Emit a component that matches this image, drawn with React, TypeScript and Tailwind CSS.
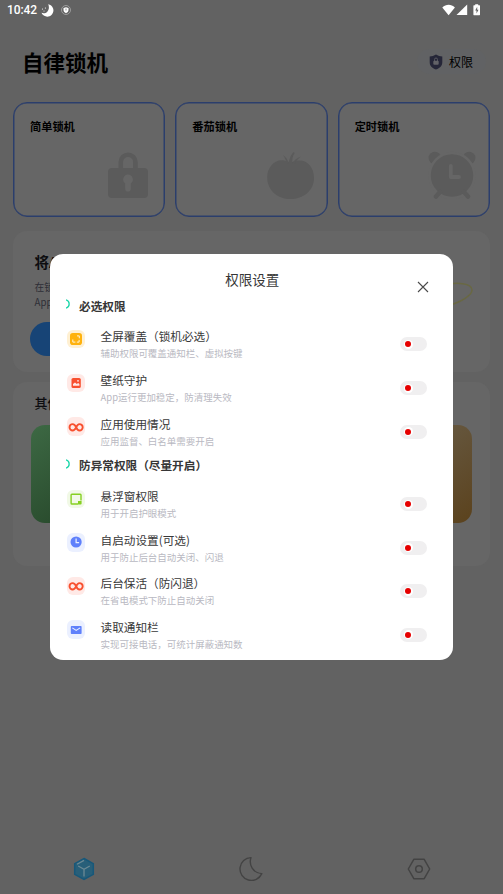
import React from "react";

type IconKind = "expand" | "image" | "infinity" | "window" | "clock" | "mail";
type Permission = { title: string; note: string; icon: IconKind };

const required: Permission[] = [
  { title: "全屏覆盖（锁机必选）", note: "辅助权限可覆盖通知栏、虚拟按键", icon: "expand" },
  { title: "壁纸守护", note: "App运行更加稳定，防清理失效", icon: "image" },
  { title: "应用使用情况", note: "应用监督、白名单需要开启", icon: "infinity" },
];

const optional: Permission[] = [
  { title: "悬浮窗权限", note: "用于开启护眼模式", icon: "window" },
  { title: "自启动设置(可选)", note: "用于防止后台自动关闭、闪退", icon: "clock" },
  { title: "后台保活（防闪退）", note: "在省电模式下防止自动关闭", icon: "infinity" },
  { title: "读取通知栏", note: "实现可接电话，可统计屏蔽通知数", icon: "mail" },
];

const tints: Record<IconKind, string> = {
  expand: "bg-[#fff0d2]",
  image: "bg-[#ffe9e6]",
  infinity: "bg-[#ffe9e6]",
  window: "bg-[#f1f9e6]",
  clock: "bg-[#ebf0ff]",
  mail: "bg-[#ebf0ff]",
};

function Glyph({ kind }: { kind: IconKind }) {
  return (
    <svg viewBox="0 0 18 18" className="size-[18px]" fill="none">
      {kind === "expand" && (
        <>
          <rect x="3" y="3" width="12" height="12" rx="2.8" fill="#ffb20d" />
          <path d="M10 5.9h2.3v2.4M5.8 9.5v2.6h2.6M9.8 12.1h2.3V9.9" stroke="#fff3d8" strokeWidth="1" />
        </>
      )}
      {kind === "image" && (
        <>
          <rect x="4.5" y="4" width="9.3" height="10" rx="1.6" fill="#f8502f" />
          <path d="M6 11.8V10l2-1.4 1.8 1.3 1.3-.8 1.3 1v1.7z" fill="#ffe9e6" />
          <circle cx="11" cy="6.8" r=".9" fill="#ffe9e6" />
        </>
      )}
      {kind === "infinity" && (
        <path
          d="M9.1 9.2C8.3 7.3 7.3 6.1 5.7 6.1a3.2 3.2 0 1 0 0 6.4c1.7 0 2.6-1.6 3.4-3.2.7-1.7 1.7-3.2 3.4-3.2a3.2 3.2 0 1 1 0 6.4c-1.6 0-2.6-1.3-3.4-3.300"
          stroke="#f8502f"
          strokeWidth="1.9"
        />
      )}
      {kind === "window" && (
        <>
          <path d="M14 10.500V5a.8.8 0 0 0-.8-.8H4.900a.8.8 0 0 0-.8.8v8.200c0 .4.4.8.8.8H11" stroke="#86d021" strokeWidth="1.400" />
          <path d="M11 11h3.600v2.600a1 1 0 0 1-1 1H11z" fill="#86d021" />
        </>
      )}
      {kind === "clock" && (
        <>
          <circle cx="9.1" cy="9" r="5.6" fill="#5f80fb" />
          <path d="M9.1 5.6v4.1h3" stroke="#ebf0ff" strokeWidth="1.2" />
        </>
      )}
      {kind === "mail" && (
        <>
          <rect x="3.8" y="5" width="10.8" height="8" rx=".8" fill="#5f80fb" />
          <path d="M5.3 6.9 9.2 9.4l3.9-2.5" stroke="#ebf0ff" strokeWidth="1.1" />
        </>
      )}
    </svg>
  );
}

function Toggle() {
  return (
    <span className="mt-[11.5px] flex h-[14px] w-[27.5px] items-center rounded-full bg-[#f0eff0] pl-1">
      <span className="flex size-[9px] items-center justify-center rounded-full bg-white">
        <span className="size-1.5 rounded-full bg-[#e60000]" />
      </span>
    </span>
  );
}

function Row({ item }: { item: Permission }) {
  return (
    <div className="flex h-[43.65px] shrink-0 items-start pl-[16.5px] pr-[25.5px]">
      <span className={"mt-1 flex size-[18.5px] shrink-0 items-center justify-center rounded-md " + tints[item.icon]}>
        <Glyph kind={item.icon} />
      </span>
      <div className="ml-[15.5px] flex flex-1 flex-col whitespace-nowrap pt-[2.4px]">
        <span className="text-[11.65px] leading-4 text-[#383838]">{item.title}</span>
        <span className="mt-[2px] text-[9.47px] leading-[14px] text-[#b9b9c2]">{item.note}</span>
      </div>
      <Toggle />
    </div>
  );
}

function Section({ title, items }: { title: string; items: Permission[] }) {
  return (
    <section>
      <div className="flex h-[28.6px] items-start pl-4">
        <svg viewBox="0 0 5 12" className="mt-[1px] h-3 w-[5px]" fill="none">
          <path d="M0 1.8a4.3 4.3 0 0 1 0 8.3" stroke="#19d6a8" strokeWidth="1.3" />
        </svg>
        <h3 className="-mt-[0.6px] ml-2 text-[11.65px] font-bold leading-[17px] text-[#363636]">{title}</h3>
      </div>
      {items.map((p) => (
        <Row key={p.title} item={p} />
      ))}
    </section>
  );
}

function StatusBar() {
  return (
    <div className="flex h-5 items-center pl-[7px] pr-[22px] text-white">
      <span className="font-[Roboto] text-[12px] font-medium leading-5 tracking-[-0.1px]">10:42</span>
      <svg viewBox="0 0 13 13" className="ml-1 size-[13px]" fill="currentColor">
        <path d="M7.2.3a6.2 6.2 0 1 1-6.7 8.5c4.500 2.100 9.200-3 6.700-8.500z" />
        <circle cx="1.500" cy="5" r=".6" />
        <circle cx="4.400" cy="4" r=".6" />
        <circle cx="3" cy="7" r=".5" />
      </svg>
      <svg viewBox="0 0 10 10" className="ml-[7px] size-[10px]" fill="none">
        <circle cx="5" cy="5" r="4.500" stroke="#b5b5b5" strokeWidth=".7" />
        <path d="M5 2.300 7.500 3v2c0 1.500-1 2.500-2.500 3.200C3.500 7.500 2.500 6.500 2.500 5V3z" fill="#fff" />
        <path d="M5 3.500v2" stroke="#666" strokeWidth=".7" />
      </svg>
      <svg viewBox="0 0 39 12" className="ml-auto h-3 w-[39px]" fill="currentColor">
        <path d="M.3 3.500C4-.2 9.200-.2 12.900 3.500L6.600 11.300z" />
        <path d="M25.200.400v10.700H14.500z" />
        <path d="M33.200.200h3v1h1.300c.3 0 .5.200.5.500v9c0 .3-.2.500-.5.500h-5.600c-.3 0-.5-.2-.5-.5v-9c0-.3.200-.5.500-.5h1.300z" />
        <path d="m35.200 2.800-2 3.700h1.300v3l2-3.800h-1.300z" fill="#626262" />
      </svg>
    </div>
  );
}

function LockArt() {
  return (
    <svg viewBox="0 0 40 46" className="mb-[18px] mr-4 h-[46px] w-10" fill="none">
      <path d="M12.800 17V10a7.300 7.300 0 0 1 14.600 0v7" stroke="#5b5b5b" strokeWidth="4.600" />
      <rect y="16" width="40" height="30" rx="4" fill="#5b5b5b" />
      <path d="M20 22.500a5 5 0 0 1 2.800 9v5.300a2.800 2.800 0 0 1-5.600 0v-5.300a5 5 0 0 1 2.800-9z" fill="#666" />
    </svg>
  );
}

function TomatoArt() {
  return (
    <svg viewBox="0 0 47 47" className="mb-[17px] mr-[13px] size-[47px]" fill="#5b5b5b">
      <path d="M21.500 10C10 4 .2 14 .2 25 .2 39 11 47 23.500 47S47 39 47 26C47 14 38 5 26 10z" />
      <path d="M21.500 12C22 7 24 3 26.300.2l1.500.6C25.500 4 25 7 25.500 12z" />
      <path d="M22 12c-1-4-3-7-6-9 2 3 2.500 5 3.500 7zM25 12c2-4 5-6 9-7.500-3.500 2.500-5 5-6.500 7.500z" />
    </svg>
  );
}

function AlarmArt() {
  return (
    <svg viewBox="0 0 48 48" className="mb-[17px] mr-[13px] size-12" fill="none">
      <circle cx="6.800" cy="7" r="6.200" fill="#5b5b5b" />
      <circle cx="41.200" cy="7" r="6.200" fill="#5b5b5b" />
      <circle cx="24" cy="24.500" r="22.500" fill="#5b5b5b" stroke="#666" strokeWidth="2.600" />
      <path d="m12 41-4 4.500M36 41l4 4.500" stroke="#5b5b5b" strokeWidth="4.500" strokeLinecap="round" />
      <path d="M22.800 15v11H31" stroke="#666" strokeWidth="3.800" strokeLinecap="round" strokeLinejoin="round" />
    </svg>
  );
}

function ModeCard({ title, children }: { title: string; children: React.ReactNode }) {
  return (
    <div className="flex h-[115.500px] flex-col justify-between rounded-[14px] border border-[#2b3e6c] bg-[#666666] shadow-[inset_0_0_0_0.500px_#2b3e6c]">
      <span className="pl-4 pt-[15.500px] text-[11.200px] font-bold leading-[17px] text-black">{title}</span>
      <div className="flex justify-end">{children}</div>
    </div>
  );
}

function BottomNav() {
  return (
    <nav className="mt-auto grid h-[50px] grid-cols-3 items-center justify-items-center">
      <svg viewBox="0 0 22 24" className="h-6 w-[22px]" fill="none">
        <path d="m11 1.500 9.300 5.200v10.600L11 22.500l-9.300-5.200V6.700z" fill="#285f79" stroke="#17587a" strokeWidth="1.500" />
        <path d="M4 7.300 11 3.400M5.200 9 11 12.300 16.800 9M11 12.300v7.200" stroke="#6b8994" strokeWidth="1.300" />
      </svg>
      <svg viewBox="0 0 24 26" className="h-[26px] w-6" fill="none">
        <path d="M12 1.600A11.400 11.400 0 1 0 22.800 17.600C14 17 9.500 9 12 1.600z" stroke="#434343" strokeWidth="1.400" strokeLinejoin="round" />
      </svg>
      <svg viewBox="0 0 24 22" className="h-[22px] w-6" fill="none">
        <path d="M6.800 1.300h10.400L22.700 11l-5.500 9.700H6.800L1.300 11z" stroke="#434343" strokeWidth="1.500" strokeLinejoin="round" />
        <circle cx="12" cy="11" r="3.300" stroke="#434343" strokeWidth="1.500" />
      </svg>
    </nav>
  );
}

export default function App() {
  return (
    <div className="relative flex h-[894px] w-[503px] flex-col overflow-hidden bg-[#626262] font-['Noto_Sans_CJK_SC',sans-serif]">
      <StatusBar />
      <header className="flex h-[81.500px] items-center justify-between pl-[22px] pr-[17px] pt-[1.500px]">
        <h1 className="text-[21.500px] font-bold leading-8 text-black">自律锁机</h1>
        <div className="flex h-[25px] w-[69px] items-center rounded-full bg-[#616264] pl-[12px]">
          <svg viewBox="0 0 14 16" className="h-4 w-3.5 shrink-0" fill="none">
            <path d="M7 .5c2 1.300 4 2 6.300 2v5.700c0 3.600-2.300 6-6.300 7.300-4-1.300-6.300-3.700-6.300-7.300V2.500C3 2.500 5 1.800 7 .5z" fill="#252638" />
            <rect x="4.300" y="6.700" width="5.400" height="4" rx="1" fill="#626267" />
            <path d="M5.500 7V5.500a1.500 1.500 0 0 1 3 0V7" stroke="#626267" strokeWidth=".8" />
          </svg>
          <span className="ml-1.5 whitespace-nowrap text-[12px] leading-5 text-black">权限</span>
        </div>
      </header>
      <main className="flex flex-col px-[13px]">
        <div className="grid grid-cols-3 gap-2.5">
          <ModeCard title="简单锁机"><LockArt /></ModeCard>
          <ModeCard title="番茄锁机"><TomatoArt /></ModeCard>
          <ModeCard title="定时锁机"><AlarmArt /></ModeCard>
        </div>
        <section className="mt-3.5 flex h-[141px] justify-between rounded-[14px] bg-[#666666] pr-[17px]">
          <div className="flex flex-col pl-[21.500px] pt-[19.500px]">
            <h2 className="text-[14.500px] font-bold leading-[22px] text-[#0d0d10]">将A</h2>
            <p className="mt-[7.500px] text-[9.700px] leading-[15px] text-[#2e2e36]">在锁<br />App</p>
            <div className="-ml-[5px] mt-3 h-[34px] w-24 rounded-full bg-[#174476]" />
          </div>
          <svg viewBox="0 0 50 30" className="mt-[51px] h-[30px] w-[50px]" fill="none">
            <path d="M20 3c14-3 29-2 29 5 0 5-9 11-22 15" stroke="#696843" strokeWidth="1.500" />
          </svg>
        </section>
        <section className="mt-2.5 flex h-[184px] flex-col rounded-[14px] bg-[#666666] px-[18px] pt-[11px]">
          <h2 className="ml-[3.500px] text-[13px] font-medium leading-5 text-[#0d0d10]">其他</h2>
          <div className="mt-3 flex justify-between">
            <div className="h-[97.500px] w-32 rounded-[14px] bg-linear-to-br from-[#3d6944] to-[#1d391f]" />
            <div className="h-[97.500px] w-32 rounded-[14px] bg-linear-to-br from-[#6c6554] to-[#5b421c]" />
          </div>
        </section>
      </main>
      <BottomNav />
      <div role="dialog" className="absolute left-[50px] top-[254px] flex h-[406px] w-[402.500px] flex-col rounded-[13px] bg-white">
        <div className="relative flex h-[43.400px] shrink-0 justify-center pl-0.5 pt-[15px]">
          <h2 className="text-[13.500px] leading-5 text-[#363636]">权限设置</h2>
          <svg viewBox="0 0 12 12" className="absolute right-[23.500px] top-[27px] size-3" fill="none">
            <path d="m1 1 10 10M11 1 1 11" stroke="#4a4a4a" strokeWidth="1.100" />
          </svg>
        </div>
        <Section title="必选权限" items={required} />
        <Section title="防异常权限（尽量开启）" items={optional} />
      </div>
    </div>
  );
}
